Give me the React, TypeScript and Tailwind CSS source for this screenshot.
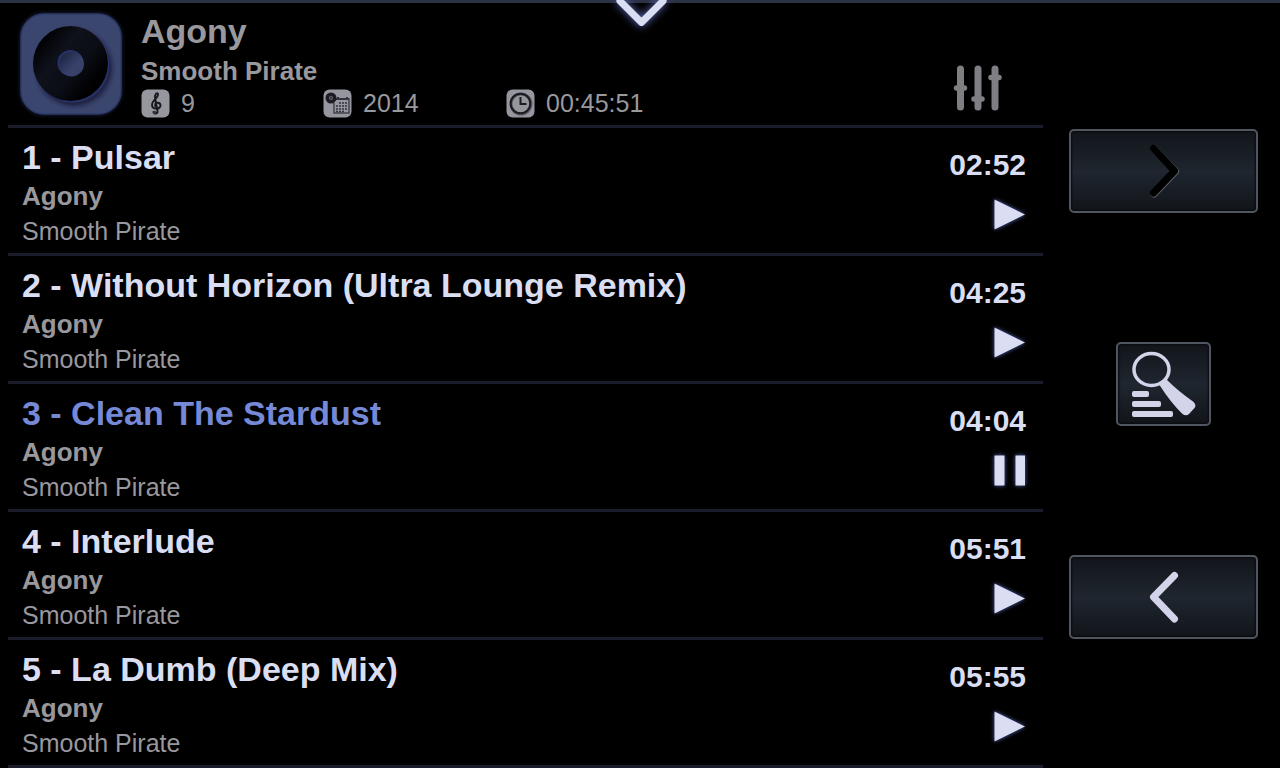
import { useState } from "react";

interface Track {
  title: string;
  album: string;
  artist: string;
  duration: string;
}

const tracks: Track[] = [
  { title: "1 - Pulsar", album: "Agony", artist: "Smooth Pirate", duration: "02:52" },
  { title: "2 - Without Horizon (Ultra Lounge Remix)", album: "Agony", artist: "Smooth Pirate", duration: "04:25" },
  { title: "3 - Clean The Stardust", album: "Agony", artist: "Smooth Pirate", duration: "04:04" },
  { title: "4 - Interlude", album: "Agony", artist: "Smooth Pirate", duration: "05:51" },
  { title: "5 - La Dumb (Deep Mix)", album: "Agony", artist: "Smooth Pirate", duration: "05:55" },
];

function AlbumCover() {
  return (
    <svg viewBox="0 0 108 108" className="size-[108px] shrink-0" role="img" aria-label="Album cover">
      <defs>
        <linearGradient id="vinyl" x1="0" y1="0.1" x2="1" y2="0.9">
          <stop offset="0.1" stopColor="#010102" />
          <stop offset="0.35" stopColor="#0f111b" />
          <stop offset="0.6" stopColor="#0b0d15" />
          <stop offset="0.8" stopColor="#010102" />
        </linearGradient>
        <linearGradient id="hole" x1="0" y1="0" x2="1" y2="1">
          <stop offset="0" stopColor="#191f3a" />
          <stop offset="0.6" stopColor="#37416a" />
        </linearGradient>
        <filter id="soft" x="-20%" y="-20%" width="140%" height="140%">
          <feGaussianBlur stdDeviation="2" />
        </filter>
      </defs>
      <rect x="3" y="3" width="102" height="102" rx="24" fill="#28325c" filter="url(#soft)" opacity="0.7" />
      <rect x="4" y="4" width="100" height="100" rx="23" fill="#3b466f" stroke="#2d3967" strokeWidth="1.5" />
      <circle cx="57" cy="58" r="38" fill="#131830" filter="url(#soft)" opacity="0.8" />
      <circle cx="55" cy="55" r="37.5" fill="#27336b" />
      <circle cx="53.500" cy="53.500" r="37.5" fill="url(#vinyl)" />
      <circle cx="53.500" cy="53" r="13" fill="#27336b" />
      <circle cx="54.500" cy="54" r="12.5" fill="url(#hole)" />
    </svg>
  );
}

function ClefIcon() {
  return (
    <svg viewBox="0 0 29 29" className="size-[29px]" aria-hidden="true">
      <rect x="0.5" y="0.5" width="28" height="28" rx="6" fill="#96969f" />
      <path
        d="M12.500 23c.5 2.500 4.500 2 4-1L14 8.500c-.4-3.300 2.400-5.800 3-3.300.6 3.700-6 6.200-6 10.600 0 5 8.500 4.900 8.500.8 0-3.900-5.700-3.700-5.400-.4.1 1 .8 1.600 1.600 1.700"
        fill="none"
        stroke="#17171d"
        strokeWidth="1.900"
        strokeLinecap="round"
      />
      <circle cx="13.500" cy="23.500" r="1.700" fill="#33333b" />
    </svg>
  );
}

function CalendarIcon() {
  return (
    <svg viewBox="0 0 29 29" className="size-[29px]" aria-hidden="true">
      <rect x="0.5" y="0.5" width="28" height="28" rx="6" fill="#96969f" />
      <path d="M12 10h14v14H11V14" fill="none" stroke="#44444e" strokeWidth="1.500" />
      <path d="M13 10h13M15 8v2M24 8v2" stroke="#34343c" strokeWidth="2" />
      <path
        d="M16 14h8.500M13 17h11.500M13 20h11.500M13 22.500h9"
        stroke="#32323a"
        strokeWidth="1.700"
        strokeDasharray="2 1"
      />
      <circle cx="8" cy="9" r="3.800" fill="#696974" stroke="#1c1c22" strokeWidth="3.400" />
      <circle cx="8" cy="9" r="1.200" fill="#3d3d46" />
    </svg>
  );
}

function ClockIcon() {
  return (
    <svg viewBox="0 0 29 29" className="size-[29px]" aria-hidden="true">
      <rect x="0.5" y="0.5" width="28" height="28" rx="6" fill="#96969f" />
      <circle cx="15" cy="15" r="10" fill="none" stroke="#60606a" strokeWidth="3" />
      <circle cx="14.500" cy="14.500" r="9.800" fill="none" stroke="#1b1b21" strokeWidth="2" />
      <path d="M14.500 8v7h6" fill="none" stroke="#1b1b21" strokeWidth="2" />
    </svg>
  );
}

function EqualizerIcon() {
  return (
    <svg viewBox="0 0 50 46" className="h-[46px] w-[50px]" aria-hidden="true">
      <g stroke="#7f7e83" strokeLinecap="round">
        <path d="M7.500 4v38M25 4v38M42 4v38" strokeWidth="7" />
        <path d="M3.500 23h8M21 34h8M38 12.500h8" strokeWidth="5.500" />
      </g>
    </svg>
  );
}

function PlayIcon() {
  return (
    <svg viewBox="0 0 33 33" className="size-[33px] drop-shadow-[0_0_2px_#5966b8]" aria-hidden="true">
      <path d="M1.500 1.500v30L32 16.500z" fill="#dadef3" />
    </svg>
  );
}

function PauseIcon() {
  return (
    <svg viewBox="0 0 33 33" className="size-[33px] drop-shadow-[0_0_2px_#5966b8]" aria-hidden="true">
      <path d="M1.500 1.500h10v30h-10zM22.500 1.500h9.500v30h-9.500z" fill="#dadef3" />
    </svg>
  );
}

function SearchIcon() {
  return (
    <svg viewBox="0 0 70 70" className="size-[70px]" aria-hidden="true">
      <ellipse cx="22.500" cy="20.500" rx="17.500" ry="16" fill="none" stroke="#d3d4e9" strokeWidth="3.500" />
      <path
        d="M30.500 36L37.500 30.500q11 11 26.500 22Q68 56 65.500 59L60 65q-3 2.500-6.500 0Q42 54 30.500 36z"
        fill="#d3d4e9"
      />
      <g fill="#d3d4e9">
        <rect x="3" y="42" width="17" height="6" rx="2" />
        <rect x="3" y="52" width="29" height="6" rx="2" />
        <rect x="3" y="62" width="41" height="6" rx="2" />
      </g>
    </svg>
  );
}

const panelButton =
  "flex h-[84px] items-center justify-center rounded-[5px] border-2 border-[#50565f] bg-linear-to-b from-[#12151b] via-[#1f262f] to-[#12151a] shadow-[inset_0_0_2px_1px_#080a0d] cursor-pointer";

export default function App() {
  const [playing, setPlaying] = useState(2);

  return (
    <div className="relative flex min-h-screen bg-black font-['Liberation_Sans',Arial,sans-serif] text-[26px] text-[#99989d]">
      <div className="absolute inset-x-0 top-0 h-[3px] bg-[#2b3244]" />
      <button
        type="button"
        aria-label="Close list"
        className="absolute left-1/2 top-0 -translate-x-1/2 cursor-pointer"
      >
        <svg viewBox="0 0 70 40" className="ml-[2px] h-10 w-[70px] drop-shadow-[0_0_4px_#6270c4]" aria-hidden="true">
          <path d="M14 1L35.500 22.500L57 1" fill="none" stroke="#dadef3" strokeWidth="7" strokeLinecap="round" strokeLinejoin="round" />
        </svg>
      </button>

      <main className="min-w-0 flex-1 pl-2">
        <header className="flex h-32 border-b-[3px] border-[#1a1b2b] pt-[11px]">
          <div className="-mt-[1px] ml-[9px]">
            <AlbumCover />
          </div>
          <div className="ml-4 flex-1">
            <h1 className="text-[34px] leading-10 font-bold">Agony</h1>
            <h2 className="pt-px leading-[38px] font-bold">Smooth Pirate</h2>
            <ul className="-mt-px flex text-[25px] leading-[29px]">
              <li className="flex w-[182px] gap-[11px]">
                <ClefIcon />
                <span>9</span>
              </li>
              <li className="flex w-[183px] gap-[11px]">
                <CalendarIcon />
                <span>2014</span>
              </li>
              <li className="flex gap-[11px]">
                <ClockIcon />
                <span>00:45:51</span>
              </li>
            </ul>
          </div>
          <button type="button" aria-label="Equalizer" className="mt-[54px] mr-10 h-[46px] cursor-pointer">
            <EqualizerIcon />
          </button>
        </header>

        <ol>
          {tracks.map((track, index) => (
            <li key={track.title} className="flex h-32 justify-between border-b-[3px] border-[#1a1b2b] pr-[17px] pl-[14px]">
              <div className="min-w-0 pt-[9px]">
                <h3
                  className={
                    index === playing
                      ? "truncate text-[34px] leading-10 font-bold text-[#7589d6]"
                      : "truncate text-[34px] leading-10 font-bold text-[#dadef3]"
                  }
                >
                  {track.title}
                </h3>
                <p className="pt-[2px] leading-[35px] font-bold">{track.album}</p>
                <p className="text-[25px] leading-[35px]">{track.artist}</p>
              </div>
              <div className="flex flex-col items-end pt-[17px]">
                <span className="text-[30px] leading-10 font-bold text-[#dadef3]">{track.duration}</span>
                <button
                  type="button"
                  aria-label={index === playing ? "Pause" : "Play"}
                  className="mt-[13px] cursor-pointer"
                  onClick={() => setPlaying(index === playing ? -1 : index)}
                >
                  {index === playing ? <PauseIcon /> : <PlayIcon />}
                </button>
              </div>
            </li>
          ))}
        </ol>
      </main>

      <nav className="flex w-[237px] flex-col items-center justify-evenly pr-[22px] pl-[26px]">
        <button type="button" aria-label="Next" className={panelButton + " w-full"}>
          <svg viewBox="0 0 36 56" className="h-14 w-9" aria-hidden="true">
            <g fill="none" strokeWidth="7" strokeLinecap="round" strokeLinejoin="round">
              <path d="M8 6L29.500 28.500L8 51" stroke="#565c69" />
              <path d="M7.500 5.500L28.500 28L7.500 50" stroke="#000" />
            </g>
          </svg>
        </button>
        <button type="button" aria-label="Search" className={panelButton + " w-[95px]"}>
          <SearchIcon />
        </button>
        <button type="button" aria-label="Previous" className={panelButton + " w-full"}>
          <svg viewBox="0 0 36 56" className="h-14 w-9" aria-hidden="true">
            <path d="M28.500 6.500L7.500 28L28.500 50" fill="none" stroke="#d3d4e9" strokeWidth="7" strokeLinecap="round" strokeLinejoin="round" />
          </svg>
        </button>
      </nav>
    </div>
  );
}
